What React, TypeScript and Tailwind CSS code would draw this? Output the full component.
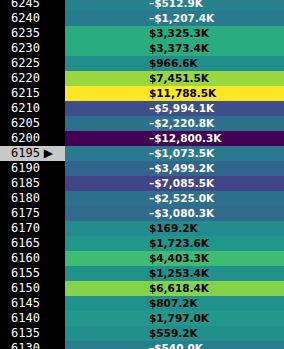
import React from 'react';

interface Row {
  strike: number;
  value: string;
  bg: string;
  negative?: boolean;
}

// viridis-coloured rows, value in thousands
const rows: Row[] = [
  { strike: 6245, value: '–$512.9K', bg: 'bg-[#27818d]', negative: true },
  { strike: 6240, value: '–$1,207.4K', bg: 'bg-[#297a8e]', negative: true },
  { strike: 6235, value: '$3,325.3K', bg: 'bg-[#29ad80]' },
  { strike: 6230, value: '$3,373.4K', bg: 'bg-[#29ad80]' },
  { strike: 6225, value: '$966.6K', bg: 'bg-[#228f8c]' },
  { strike: 6220, value: '$7,451.5K', bg: 'bg-[#98d73e]' },
  { strike: 6215, value: '$11,788.5K', bg: 'bg-[#fde725]' },
  { strike: 6210, value: '–$5,994.1K', bg: 'bg-[#3d4e89]', negative: true },
  { strike: 6205, value: '–$2,220.8K', bg: 'bg-[#2d708e]', negative: true },
  { strike: 6200, value: '–$12,800.3K', bg: 'bg-[#440154]', negative: true },
  { strike: 6195, value: '–$1,073.5K', bg: 'bg-[#297a8e]', negative: true },
  { strike: 6190, value: '–$3,499.2K', bg: 'bg-[#32658d]', negative: true },
  { strike: 6185, value: '–$7,085.5K', bg: 'bg-[#414487]', negative: true },
  { strike: 6180, value: '–$2,525.0K', bg: 'bg-[#2e6f8e]', negative: true },
  { strike: 6175, value: '–$3,080.3K', bg: 'bg-[#306a8d]', negative: true },
  { strike: 6170, value: '$169.2K', bg: 'bg-[#238c8c]' },
  { strike: 6165, value: '$1,723.6K', bg: 'bg-[#21968a]' },
  { strike: 6160, value: '$4,403.3K', bg: 'bg-[#3fbc73]' },
  { strike: 6155, value: '$1,253.4K', bg: 'bg-[#21918c]' },
  { strike: 6150, value: '$6,618.4K', bg: 'bg-[#84d34b]' },
  { strike: 6145, value: '$807.2K', bg: 'bg-[#21918c]' },
  { strike: 6140, value: '$1,797.0K', bg: 'bg-[#21988a]' },
  { strike: 6135, value: '$559.2K', bg: 'bg-[#228f8c]' },
  { strike: 6130, value: '–$540.0K', bg: 'bg-[#277f8d]', negative: true },
];

const SELECTED = 6195;

export default function App() {
  return (
    <div className="h-[349px] w-[284px] overflow-hidden bg-black">
      {/* list is scrolled a few px down */}
      <div className="-mt-1">
        {rows.map((r) => {
          const sel = r.strike === SELECTED;
          return (
            <div key={r.strike} className="flex h-[15px]">
              <div
                className={`w-[65px] shrink-0 pl-[11px] font-['DejaVu_Sans_Mono',monospace] text-[12px] leading-[15px] ${
                  sel ? 'bg-[#c8c8c8] text-black' : 'bg-black text-white'
                }`}
              >
                {r.strike}
                {sel && <span className="font-['DejaVu_Sans',sans-serif]"> ▶</span>}
              </div>
              <div
                className={`flex-1 pl-[84px] font-['DejaVu_Sans',sans-serif] text-[10.5px] font-bold leading-[15px] ${r.bg} ${
                  r.negative ? 'text-white' : 'text-black'
                }`}
              >
                {r.value}
              </div>
            </div>
          );
        })}
      </div>
    </div>
  );
}
